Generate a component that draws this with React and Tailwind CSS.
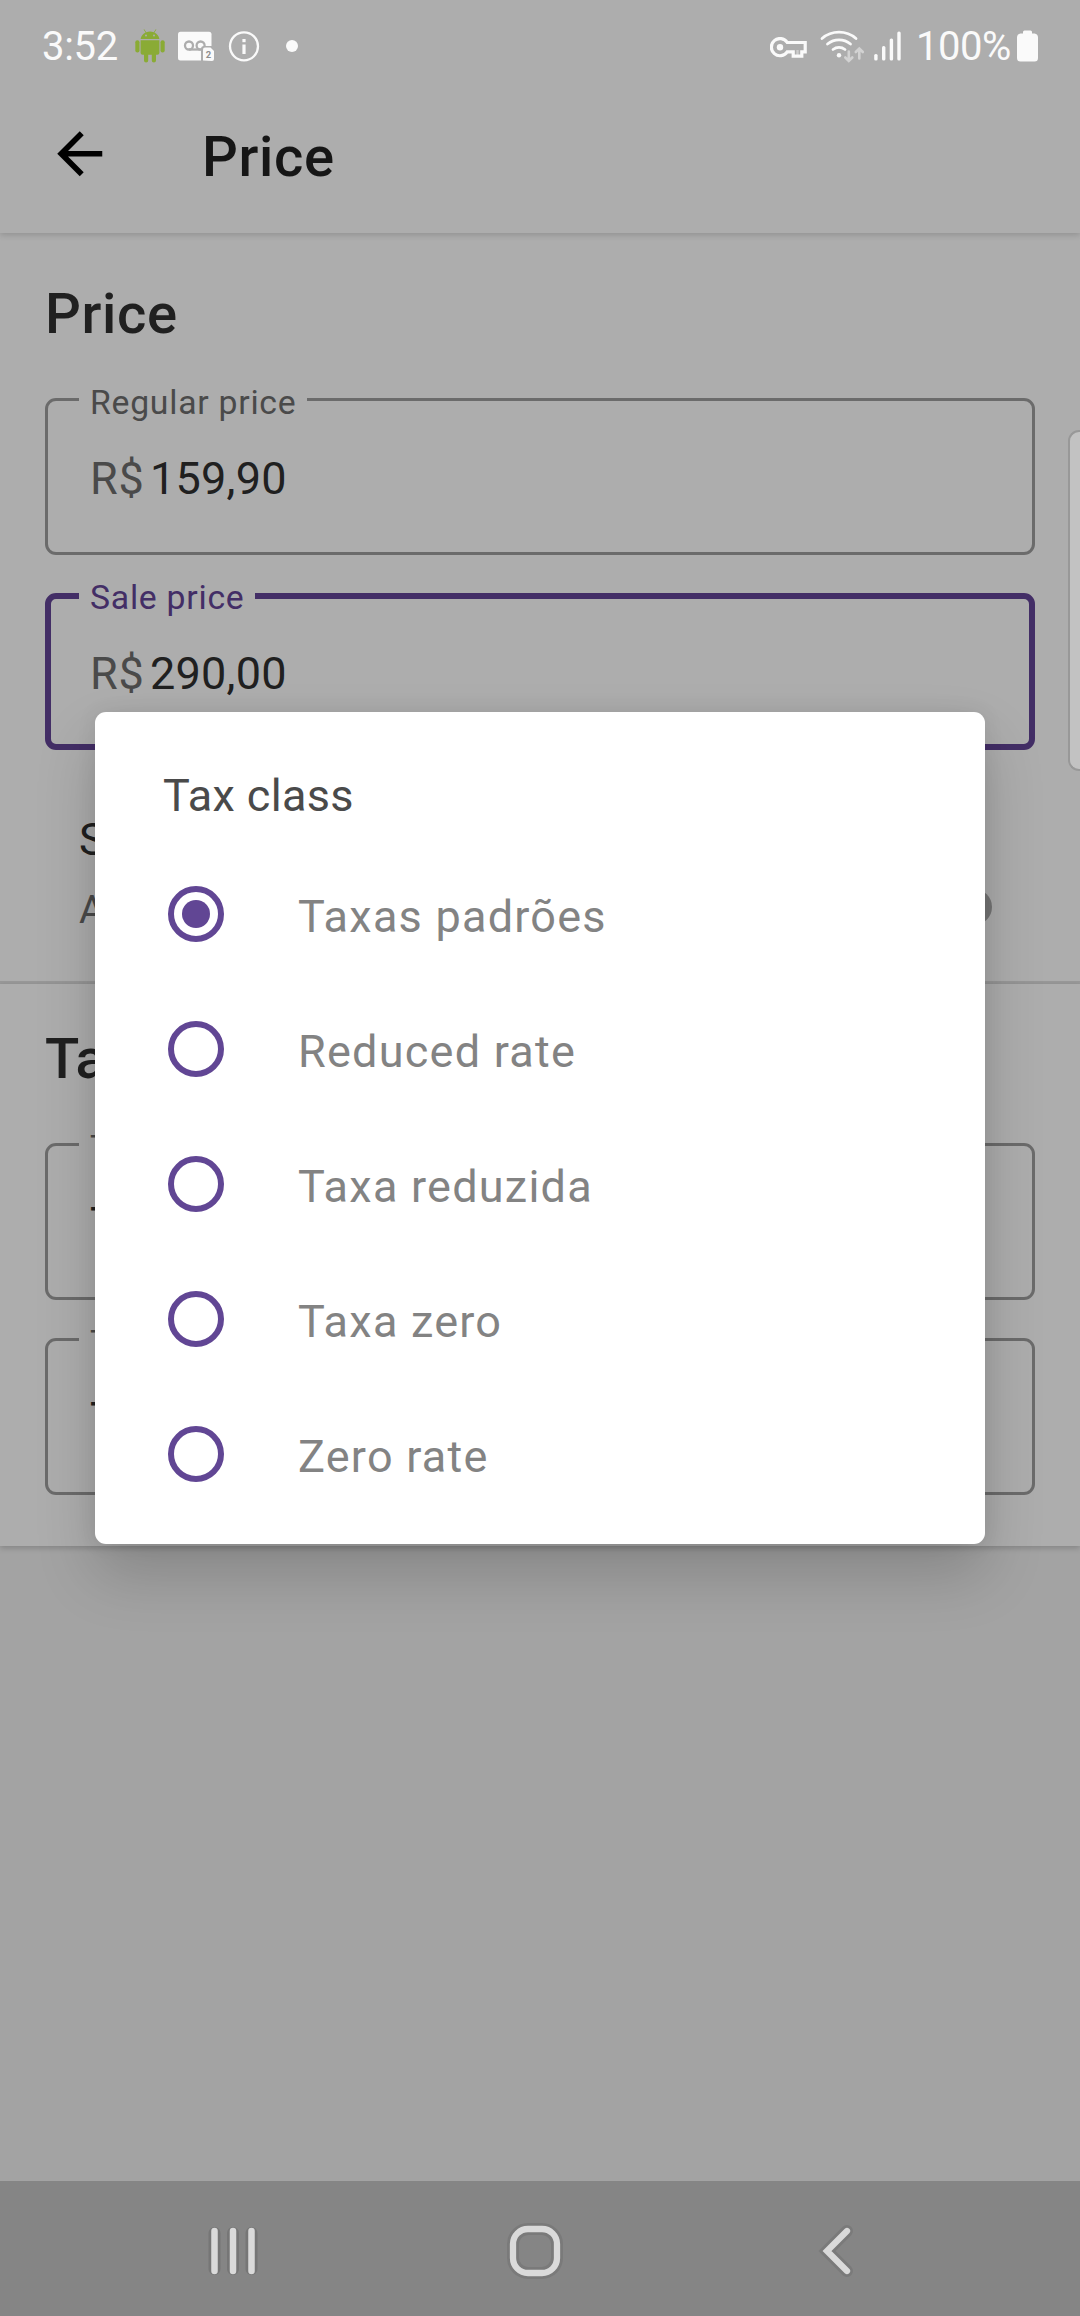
function StatusBar() {
  return (
    <div className="flex h-[76px] items-center pt-[16px] text-[40px] leading-none text-[#fafafa]">
      <span className="ml-[42px] w-[93px] shrink-0 pt-[2px] tracking-[-0.3px]">3:52</span>
      <svg className="h-[34px] w-[30px] shrink-0 text-[#8aab35]" viewBox="0 0 30 34" fill="currentColor">
        <path d="M5.6 10a9.3 8.6 0 0 1 5-6.5L8.6.6l.6-.4 2.1 3a10 10 0 0 1 7.400 0l2.1-3 .6.4-2 2.900a9.3 8.600 0 0 1 5 6.500z" />
        <circle cx="11" cy="6.600" r="1" fill="#adadad" />
        <circle cx="19" cy="6.600" r="1" fill="#adadad" />
        <path d="M5.600 11.300h18.800v12.500a2 2 0 0 1-2 2h-1.400v5.600a2.100 2.100 0 0 1-4.200 0v-5.600h-3.600v5.600a2.100 2.100 0 0 1-4.200 0v-5.600H7.600a2 2 0 0 1-2-2z" />
        <rect x="0.300" y="11.200" width="4.200" height="12.400" rx="2" />
        <rect x="25.500" y="11.200" width="4.200" height="12.400" rx="2" />
      </svg>
      <svg className="ml-[13px] h-[30px] w-[37px] shrink-0" viewBox="0 0 37 30">
        <rect x="0" y="0.800" width="33.500" height="28.700" rx="2.500" fill="#fafafa" />
        <g fill="none" stroke="#adadad" strokeWidth="2.300">
          <circle cx="11" cy="14.500" r="4" />
          <circle cx="22.600" cy="14.500" r="4" />
          <path d="M11 18.500h11.600" />
        </g>
        <path d="M23 30V18a3 3 0 0 1 3-3h11v15z" fill="#adadad" />
        <path d="M25 29.500V18.500q0-2 2-2h5.500l3.500 3.500v8q0 2-2 2z" fill="#fafafa" />
        <text x="27.700" y="27" fontSize="9.500" fontWeight="700" fill="#8f8f8f">2</text>
      </svg>
      <svg className="ml-[13px] h-[32px] w-[32px] shrink-0" viewBox="0 0 32 32">
        <circle cx="16" cy="16.300" r="14" fill="none" stroke="#fafafa" strokeWidth="2.300" />
        <rect x="14.400" y="14.500" width="3.200" height="9.500" fill="#fafafa" />
        <rect x="14.400" y="9" width="3.200" height="3.200" fill="#fafafa" />
      </svg>
      <span className="ml-[26px] size-[12px] shrink-0 rounded-full bg-[#fafafa]" />

      <svg className="mt-[3px] ml-auto h-[22px] w-[38px] shrink-0" viewBox="0 0 38 22">
        <path
          d="M17.200 5.500H35.200V14.800H31.800V19.200H23.200V14.800H17.200A8.600 8.600 0 1 1 17.200 5.500z"
          fill="none"
          stroke="#fafafa"
          strokeWidth="3.200"
        />
        <circle cx="10" cy="10.200" r="3.200" fill="#fafafa" />
        <path d="M27.500 13V18" fill="none" stroke="#fafafa" strokeWidth="2.400" opacity="0.400" />
      </svg>
      <svg className="ml-[12px] h-[34px] w-[46px] shrink-0" viewBox="0 0 46 34" fill="none" strokeWidth="2.800" strokeLinecap="round">
        <g stroke="#fafafa">
          <path d="M2 9.500a26 26 0 0 1 34 0" />
          <path d="M7.500 15a18 18 0 0 1 23 0" />
          <path d="M13 20.500a10 10 0 0 1 12 0" />
        </g>
        <circle cx="19" cy="26.200" r="2.200" fill="#fafafa" />
        <g stroke="#d2d2d2" strokeWidth="2.600">
          <path d="M28.800 22.500v9M25.300 28.500l3.500 3.500 3.500-3.500" />
          <path d="M39.300 29.500v-9M35.800 23l3.500-3.500 3.500 3.500" />
        </g>
      </svg>
      <svg className="ml-[8px] h-[30px] w-[28px] shrink-0" viewBox="0 0 28 30" fill="#fafafa">
        <rect x="0.200" y="23" width="3.400" height="6.500" rx="1.500" />
        <rect x="8" y="15" width="3.400" height="14.500" rx="1.500" />
        <rect x="15.700" y="7.500" width="3.400" height="22" rx="1.500" />
        <rect x="23.300" y="0.500" width="3.400" height="29" rx="1.500" />
      </svg>
      <span className="ml-[14px] w-[101px] shrink-0 pt-[2px] tracking-[-0.450px]">100%</span>
      <svg className="mr-[42px] h-[32px] w-[21px] shrink-0" viewBox="0 0 21 32" fill="#fafafa">
        <path d="M6 3V2q0-1.500 1.500-1.500h6Q15 .5 15 2v1.500h2.500Q21 4 21 7.500V28q0 3.500-3.500 3.500h-14Q0 31.500 0 28V7.500Q0 4 3.500 3.500H6z" />
      </svg>
    </div>
  );
}

function AppBar() {
  return (
    <div className="flex h-[157px] items-center">
      <svg className="mb-[1px] ml-[45.500px] size-[67.500px] shrink-0" viewBox="0 0 24 24">
        <path d="M20 11H7.830l5.590-5.590L12 4l-8 8 8 8 1.410-1.410L7.830 13H20v-2z" />
      </svg>
      <h1 className="ml-[89px] pt-[5px] text-[56.250px] leading-[66px] font-medium tracking-[0.600px] text-[#161616]">
        Price
      </h1>
    </div>
  );
}

function Field({ label, prefix, value, active, className }) {
  return (
    <div className={"relative h-[157px] " + className}>
      <div
        className={
          "flex h-full items-center rounded-[11px] pt-[4px] text-[45px] leading-[54px] tracking-[0.250px] text-[#202020] " +
          (active ? "border-[6px] border-[#432e66] pl-[39px]" : "border-[3px] border-[#6b6b6b] pl-[42px]")
        }
      >
        {prefix && <span className="w-[60px] tracking-[0.800px] text-[#4a4a4a]">{prefix}</span>}
        <span>{value}</span>
      </div>
      <span
        className={
          "absolute top-[-15px] left-[34px] bg-[#adadad] px-[11px] text-[33.750px] leading-[40px] tracking-[0.740px] " +
          (active ? "text-[#432e66]" : "text-[#4a4a4a]")
        }
      >
        {label}
      </span>
    </div>
  );
}

const options = ["Taxas padrões", "Reduced rate", "Taxa reduzida", "Taxa zero", "Zero rate"];

function TaxClassDialog() {
  return (
    <div className="absolute top-[712px] left-[95px] h-[832px] w-[890px] rounded-[11px] bg-white shadow-[0_30px_60px_rgba(0,0,0,0.18),0_0_20px_rgba(0,0,0,0.08)]">
      <h2 className="pt-[57px] pl-[68px] text-[45px] leading-[54px] tracking-[0.350px] text-[#4a4a4a]">Tax class</h2>
      <ul className="mt-[23px]">
        {options.map((option, i) => (
          <li key={option} className="flex h-[135px] items-center pl-[73px]">
            <span className="flex size-[56px] items-center justify-center rounded-full border-[6px] border-[#614694]">
              {i === 0 && <span className="size-[28px] rounded-full bg-[#614694]" />}
            </span>
            <span className="ml-[74px] pt-[6px] text-[45px] leading-[54px] tracking-[1.240px] text-[#838383]">{option}</span>
          </li>
        ))}
      </ul>
    </div>
  );
}

function NavBar() {
  return (
    <div className="flex h-[135px] items-center bg-[#858585] pt-[5px]">
      <svg className="ml-[205px] h-[60px] w-[56px]" viewBox="0 0 56 60">
        <g stroke="#767676" strokeWidth="12" strokeLinecap="round">
          <path d="M9.500 12v36M28 12v36M46.500 12v36" />
        </g>
        <g stroke="#dadada" strokeWidth="6.500" strokeLinecap="round">
          <path d="M9.500 10v40M28 10v40M46.500 10v40" />
        </g>
      </svg>
      <svg className="ml-[244px] h-[60px] w-[60px]" viewBox="0 0 60 60" fill="none">
        <rect x="8" y="8" width="44" height="44" rx="15" stroke="#7a7a7a" strokeWidth="12" />
        <rect x="8" y="8" width="44" height="44" rx="15" stroke="#dadada" strokeWidth="6.300" />
      </svg>
      <svg className="ml-[250px] h-[60px] w-[40px]" viewBox="0 0 40 60" fill="none" strokeLinecap="round">
        <path d="M32 10 12 30l20 20" stroke="#7a7a7a" strokeWidth="12" />
        <path d="M32 10 12 30l20 20" stroke="#dadada" strokeWidth="6.300" />
      </svg>
    </div>
  );
}

export default function App() {
  return (
    <div className="relative flex h-[2316px] w-[1080px] flex-col overflow-hidden bg-[#a3a3a3] font-[Roboto,sans-serif]">
      <header className="relative bg-[#adadad] shadow-[0_2px_6px_rgba(0,0,0,0.16)]">
        <StatusBar />
        <AppBar />
      </header>
      <section className="h-[751px] border-b-[3px] border-[#999999] bg-[#adadad] px-[45px] pt-[48px]">
        <h2 className="text-[56.250px] leading-[66px] font-medium tracking-[0.600px] text-[#202020]">Price</h2>
        <Field className="mt-[51px]" label="Regular price" prefix="R$" value="159,90" />
        <Field className="mt-[38px]" label="Sale price" prefix="R$" value="290,00" active />
        <div className="mt-[63px] flex items-center justify-between px-[34px]">
          <div>
            <p className="text-[45px] leading-[54px] text-[#202020]">Schedule sale</p>
            <p className="mt-[19px] text-[39.400px] leading-[48px] text-[#4a4a4a]">Automatically start and end a sale</p>
          </div>
          <span className="mt-[67px] mr-[9px] size-[36px] rounded-full bg-[#757575]" />
        </div>
      </section>
      <section className="h-[561.500px] bg-[#adadad] px-[45px] pt-[42px] shadow-[0_2px_6px_rgba(0,0,0,0.2)]">
        <h2 className="text-[56.250px] leading-[66px] font-medium text-[#202020]">Tax settings</h2>
        <Field className="mt-[51px]" label="Tax status" value="Taxable" />
        <Field className="mt-[38px]" label="Tax class" value="Taxas padrões" />
      </section>
      <div className="flex-1" />
      <div className="absolute top-[430px] right-0 h-[341px] w-[12px] rounded-l-[11px] border-y-[2px] border-l-[2px] border-[#989898] bg-[#c2c2c2]" />
      <TaxClassDialog />
      <NavBar />
    </div>
  );
}
